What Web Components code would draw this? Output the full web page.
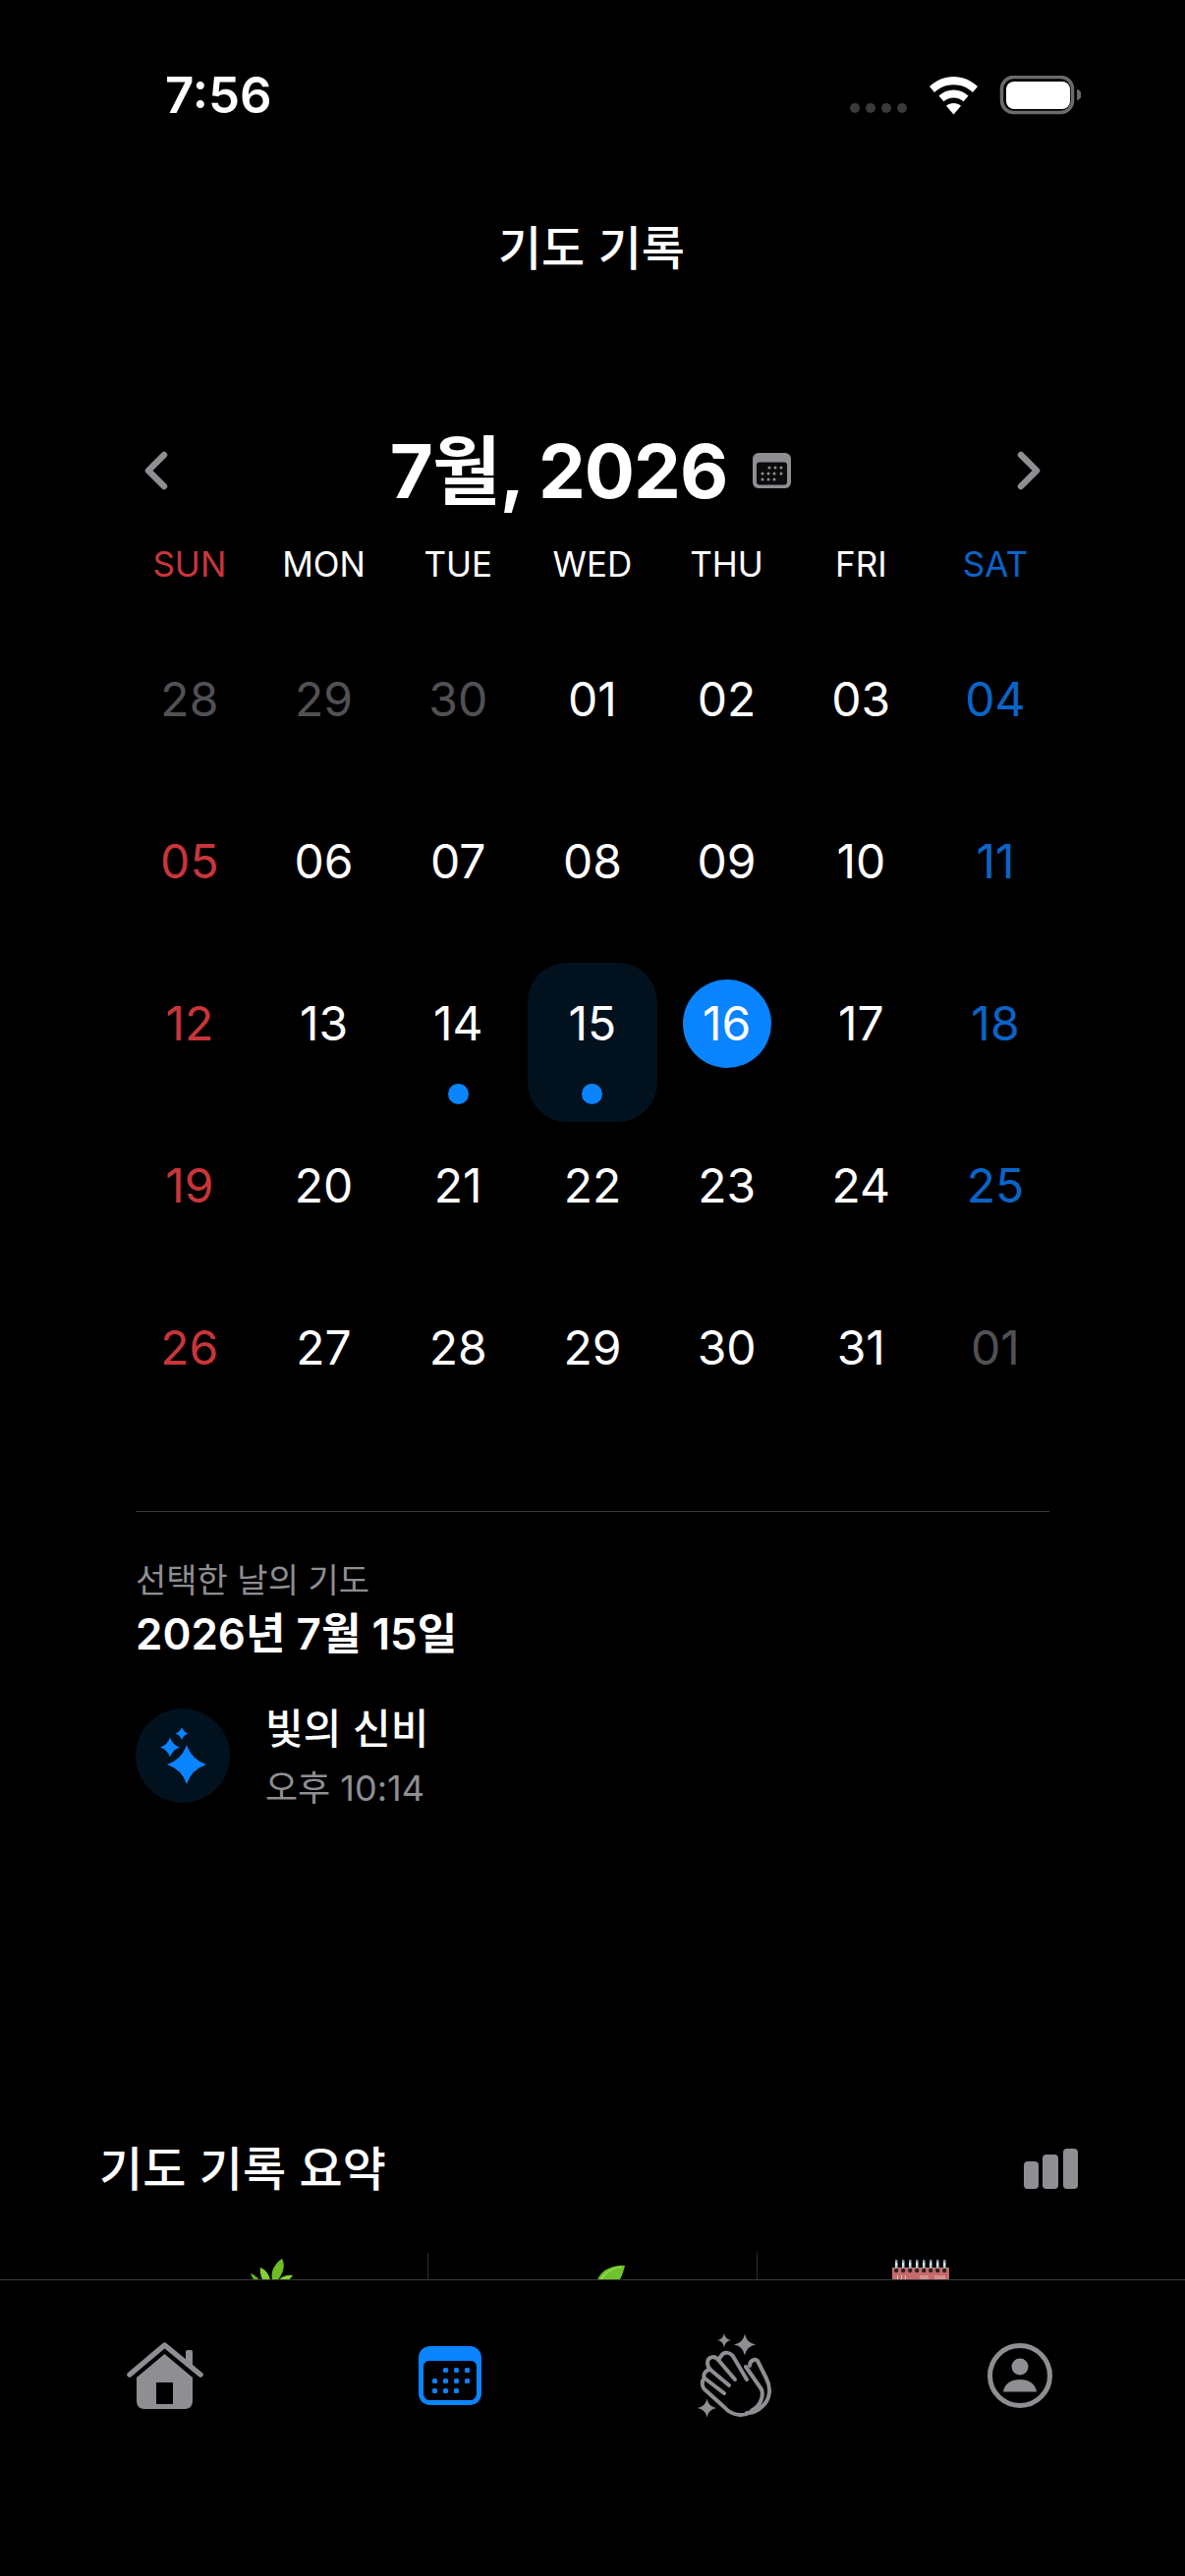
<!DOCTYPE html>
<html lang="ko">
<head>
<meta charset="utf-8">
<title>기도 기록</title>
<style>
  html, body { margin: 0; padding: 0; background: #000; }
  body { width: 1206px; height: 2622px; overflow: hidden; }
</style>
</head>
<body>
<prayer-app></prayer-app>

<script>
const KR = '"Noto Sans CJK KR", sans-serif'
const LATIN = 'Inter, "Noto Sans CJK KR", sans-serif'

// four point star used by the badge and the clap tab
const sparkle = (x, y, r, k = 0.16) => {
  const c = r * k
  return `<path d="M${x} ${y - r}Q${x + c} ${y - c} ${x + r} ${y}Q${x + c} ${y + c} ${x} ${y + r}Q${x - c} ${y + c} ${x - r} ${y}Q${x - c} ${y - c} ${x} ${y - r}Z"/>`
}

customElements.define('status-bar', class extends HTMLElement {
  constructor() {
    super()
    this.attachShadow({ mode: 'open' }).innerHTML = `
      <style>
        :host { display: flex; align-items: flex-start; height: 200px; box-sizing: border-box; padding: 68px 106px 0 168px; color: #fff; }
        .time { font: 600 51px/58px ${LATIN}; flex: 1; }
        svg { display: block; margin-top: 9px; }
      </style>
      <span class="time">7:56</span>
      <svg width="235" height="42" viewBox="0 0 235 42">
        <g fill="#3a3a3c">
          <circle cx="5" cy="33" r="5"/><circle cx="21" cy="33" r="5"/><circle cx="37" cy="33" r="5"/><circle cx="53" cy="33" r="5"/>
        </g>
        <path fill="#fff" d="M105.5 1C114.5 1 123 4.6 130 11l-5 6C119.500 12 113 9.300 105.500 9.300S91.500 12 86 17l-5-6C88 4.600 96.500 1 105.500 1Z"/>
        <path fill="#fff" d="M105.500 14.500C111 14.500 116.200 16.600 120.500 20.500L115.600 26.300C112.800 23.800 109.300 22.500 105.500 22.500S98.200 23.800 95.400 26.300L90.500 20.500C94.800 16.600 100 14.500 105.500 14.500Z"/>
        <path fill="#fff" d="M105.500 28c2.800 0 5.400 1 7.500 2.700L105.500 39.500 98 30.700C100.100 29 102.700 28 105.500 28Z"/>
        <rect x="154.500" y="1.500" width="72" height="36" rx="12" fill="none" stroke="#6b6b6e" stroke-width="3.500"/>
        <rect x="159" y="6" width="65" height="28" rx="8" fill="#fff"/>
        <path fill="#6b6b6e" d="M231 14c3 .6 5 3 5 5.500s-2 5-5 5.500Z"/>
      </svg>
    `
  }
})

customElements.define('nav-title', class extends HTMLElement {
  constructor() {
    super()
    this.attachShadow({ mode: 'open' }).innerHTML = `
      <style>
        :host { display: block; height: 231px; padding: 19px 2px 0 0; box-sizing: border-box; text-align: center; color: #fff; font: 500 48px/60px ${KR}; }
      </style>
      <slot></slot>
    `
  }
})

customElements.define('month-header', class extends HTMLElement {
  constructor() {
    super()
    this.attachShadow({ mode: 'open' }).innerHTML = `
      <style>
        :host { display: flex; align-items: center; height: 96px; padding: 0 147px; color: #fff; }
        .mid { flex: 1; display: flex; align-items: center; justify-content: center; gap: 26px; padding-right: 4px; }
        .label { font: 700 76px/96px ${LATIN}; letter-spacing: -1px; }
        svg { display: block; flex: none; }
      </style>
      <svg width="24" height="40" viewBox="0 0 24 40"><path d="M20 4 4 20l16 16" fill="none" stroke="#8e8e93" stroke-width="6.500" stroke-linecap="round" stroke-linejoin="round"/></svg>
      <div class="mid">
        <span class="label"><slot></slot></span>
        <svg width="39" height="36" viewBox="0 0 39 36">
          <rect width="39" height="36" rx="6" fill="#8e8e93"/>
          <rect x="4" y="9.500" width="31" height="23" rx="3" fill="#0b0b0c"/>
          <g fill="#8e8e93">
            <circle cx="17" cy="15" r="1.500"/><circle cx="23" cy="15" r="1.500"/><circle cx="29" cy="15" r="1.500"/>
            <circle cx="10" cy="21" r="1.500"/><circle cx="16" cy="21" r="1.500"/><circle cx="22" cy="21" r="1.500"/><circle cx="29" cy="21" r="1.500"/>
            <circle cx="10" cy="27" r="1.500"/><circle cx="16" cy="27" r="1.500"/><circle cx="22" cy="27" r="1.500"/>
          </g>
        </svg>
      </div>
      <svg width="24" height="40" viewBox="0 0 24 40"><path d="M4 4l16 16L4 36" fill="none" stroke="#8e8e93" stroke-width="6.500" stroke-linecap="round" stroke-linejoin="round"/></svg>
    `
  }
})

customElements.define('calendar-day', class extends HTMLElement {
  constructor() {
    super()
    this.attachShadow({ mode: 'open' }).innerHTML = `
      <style>
        :host { display: flex; justify-content: center; height: 165px; color: #fff; font: 400 48px/90px ${LATIN}; }
        :host([tone="sun"]) { color: #c8353a; }
        :host([tone="sat"]) { color: #0a64c8; }
        :host([tone="dim"]) { color: #515154; }
        .box { width: 132px; height: 162px; border-radius: 40px; display: flex; flex-direction: column; align-items: center; box-sizing: border-box; padding-top: 17px; }
        :host([selected]) .box { background: #02111e; }
        .num { width: 90px; height: 90px; border-radius: 50%; text-align: center; }
        :host([today]) .num { background: #0a84ff; color: #fff; }
        .dot { display: none; width: 21px; height: 21px; border-radius: 50%; background: #0a84ff; margin-top: 16px; }
        :host([marked]) .dot { display: block; }
      </style>
      <div class="box"><span class="num"><slot></slot></span><span class="dot"></span></div>
    `
  }
})

customElements.define('month-grid', class extends HTMLElement {
  constructor() {
    super()
    const head = [['SUN','#c8353a'],['MON','#fff'],['TUE','#fff'],['WED','#fff'],['THU','#fff'],['FRI','#fff'],['SAT','#0a64c8']]
    const days = [
      ['28','dim'],['29','dim'],['30','dim'],['01'],['02'],['03'],['04','sat'],
      ['05','sun'],['06'],['07'],['08'],['09'],['10'],['11','sat'],
      ['12','sun'],['13'],['14','','marked'],['15','','marked selected'],['16','','today'],['17'],['18','sat'],
      ['19','sun'],['20'],['21'],['22'],['23'],['24'],['25','sat'],
      ['26','sun'],['27'],['28'],['29'],['30'],['31'],['01','dim']
    ]
    this.attachShadow({ mode: 'open' }).innerHTML = `
      <style>
        :host { display: block; padding-left: 124.500px; }
        .week, .days { display: grid; grid-template-columns: repeat(7, 136.700px); }
        .week span { text-align: center; font: 400 35px/44px ${LATIN}; }
        .week { height: 98px; align-content: start; }
      </style>
      <div class="week">${head.map(([t, c]) => `<span style="color:${c}">${t}</span>`).join('')}</div>
      <div class="days">${days.map(([n, tone, flags]) => `<calendar-day ${tone ? `tone="${tone}"` : ''} ${flags || ''}>${n}</calendar-day>`).join('')}</div>
    `
  }
})

customElements.define('selected-day', class extends HTMLElement {
  constructor() {
    super()
    this.attachShadow({ mode: 'open' }).innerHTML = `
      <style>
        :host { display: block; margin: 63px 138px 0; border-top: 1px solid #3a3a3c; padding-top: 45px; height: 641px; box-sizing: border-box; }
        .cap { color: #8e8e93; font: 400 34px/46px ${KR}; }
        .date { color: #fff; font: 600 44px/58px ${LATIN}; margin-top: 4px; }
        .row { display: flex; gap: 36px; margin-top: 40px; align-items: center; }
        .badge { width: 96px; height: 96px; border-radius: 50%; background: #02111e; display: flex; align-items: center; justify-content: center; flex: none; }
        svg { display: block; }
        .name { color: #fff; font: 500 42px/50px ${KR}; }
        .time { color: #8e8e93; font: 400 36px/44px ${LATIN}; margin-top: 16px; }
      </style>
      <div class="cap">선택한 날의 기도</div>
      <div class="date">2026년 7월 15일</div>
      <div class="row">
        <div class="badge">
          <svg width="47" height="58" viewBox="0 0 47 58" fill="#0a84ff">
            ${sparkle(27, 38, 20, 0.25)}${sparkle(10, 20.500, 10, 0.25)}${sparkle(22, 6.500, 6.500, 0.25)}
          </svg>
        </div>
        <div>
          <div class="name">빛의 신비</div>
          <div class="time">오후 10:14</div>
        </div>
      </div>
    `
  }
})

customElements.define('summary-section', class extends HTMLElement {
  constructor() {
    super()
    this.attachShadow({ mode: 'open' }).innerHTML = `
      <style>
        :host { display: block; padding: 0 109px 0 101px; }
        .head { display: flex; align-items: flex-start; justify-content: space-between; height: 60px; color: #fff; font: 500 48px/50px ${KR}; }
        .head svg { margin-top: 8px; }
        .cells { display: grid; grid-template-columns: 334px 335px 1fr; margin-top: 54px; }
        .cell { height: 120px; display: flex; padding-top: 6px; box-sizing: border-box; }
        .cell + .cell { border-left: 1px solid #2c2c2e; }
        svg { display: block; }
      </style>
      <div class="head">
        <span>기도 기록 요약</span>
        <svg width="55" height="41" viewBox="0 0 55 41" fill="#8e8e93">
          <rect x="0" y="13" width="15" height="28" rx="4"/><rect x="19" y="6" width="16" height="35" rx="4"/><rect x="40" y="0" width="15" height="41" rx="4"/>
        </svg>
      </div>
      <div class="cells">
        <div class="cell" style="padding-left:154px">
          <svg width="44" height="44" viewBox="0 0 44 44">
            <path fill="#6dbd25" d="M32 0C36 8 33 17 24 26 19 17 22 7 32 0Z"/>
            <path fill="#86cf33" d="M10 9C17 12 21 19 20 28 13 25 9 18 10 9Z"/>
            <path fill="#86cf33" d="M43 17C37 16 31 18 27 24 33 26 39 23 43 17Z"/>
            <path fill="#63b01f" d="M0 15C5 17 9 20 11 26 6 26 2 21 0 15Z"/>
          </svg>
        </div>
        <div class="cell" style="padding-left:172px">
          <svg width="30" height="44" viewBox="0 0 30 44">
            <path fill="#6fc32c" d="M28 7C26 15 24 24 14 29 7 31 2 28 0 22 3 12 15 6 28 7Z"/>
            <path fill="none" stroke="#a3e05a" stroke-width="1.200" d="M25 8C14 10 6 15 2 24"/>
          </svg>
        </div>
        <div class="cell" style="padding-left:137px">
          <svg width="58" height="44" viewBox="0 0 58 44">
            <defs><linearGradient id="ring" x1="0" y1="0" x2="0" y2="1"><stop offset="0" stop-color="#5f7180"/><stop offset=".4" stop-color="#e6f0f8"/><stop offset="1" stop-color="#8a98a3"/></linearGradient></defs>
            <rect x="0" y="9" width="58" height="35" fill="#c46a6c"/>
            <g fill="url(#ring)">
              <rect x="3" y="1" width="2.500" height="11"/><rect x="10" y="1" width="2.500" height="11"/><rect x="17" y="1" width="2.500" height="11"/><rect x="24" y="1" width="2.500" height="11"/><rect x="31" y="1" width="2.500" height="11"/><rect x="38" y="1" width="2.500" height="11"/><rect x="45" y="1" width="2.500" height="11"/><rect x="52" y="1" width="2.500" height="11"/>
            </g>
            <g fill="#2e2022">
              <circle cx="4.200" cy="12" r="2.200"/><circle cx="11.200" cy="12" r="2.200"/><circle cx="18.200" cy="12" r="2.200"/><circle cx="25.200" cy="12" r="2.200"/><circle cx="32.200" cy="12" r="2.200"/><circle cx="39.200" cy="12" r="2.200"/><circle cx="46.200" cy="12" r="2.200"/><circle cx="53.200" cy="12" r="2.200"/>
            </g>
            <path d="M5 17h1v4H5ZM9 17h1v4H9ZM13 17h1v4h-1Z" fill="#ecc4c4"/>
            <path d="M28 17h9v4h-9ZM43 17h11v4H43Z" fill="#d68e8f"/>
          </svg>
        </div>
      </div>
    `
  }
})

customElements.define('tab-bar', class extends HTMLElement {
  constructor() {
    super()
    this.attachShadow({ mode: 'open' }).innerHTML = `
      <style>
        :host { display: grid; grid-template-columns: repeat(4, 290px); height: 302px; box-sizing: border-box; padding: 52px 23px 0; background: #000; border-top: 1px solid #3a3a3c; align-items: start; }
        div { height: 90px; display: flex; align-items: center; justify-content: center; }
        svg { display: block; }
      </style>
      <div>
        <svg width="78" height="68" viewBox="0 0 78 68" fill="#8e8e93">
          <path fill-rule="evenodd" d="M38.500 12 67 36V60c0 4.400-3 8-7.500 8H17.500C13 68 10 64.400 10 60V36ZM30 41V63H47V41Z"/>
          <rect x="60" y="8" width="7" height="17" rx="2"/>
          <path d="M3 33 38.500 3 75 33" fill="none" stroke="#8e8e93" stroke-width="5.500" stroke-linecap="round" stroke-linejoin="round"/>
        </svg>
      </div>
      <div>
        <svg width="64" height="60" viewBox="0 0 64 60" fill="#0a84ff">
          <path fill-rule="evenodd" d="M12 0H52C59 0 64 5 64 12V48C64 55 59 60 52 60H12C5 60 0 55 0 48V12C0 5 5 0 12 0ZM11 15C7.500 15 5 17.500 5 21V48C5 51.500 7.500 55 11 55H53C56.500 55 59 51.500 59 48V21C59 17.500 56.500 15 53 15Z"/>
          <rect x="25" y="22" width="5" height="5" rx="1.500"/><rect x="36" y="22" width="5" height="5" rx="1.500"/><rect x="47" y="22" width="5" height="5" rx="1.500"/>
          <rect x="14" y="33" width="5" height="5" rx="1.500"/><rect x="25" y="33" width="5" height="5" rx="1.500"/><rect x="36" y="33" width="5" height="5" rx="1.500"/><rect x="47" y="33" width="5" height="5" rx="1.500"/>
          <rect x="14" y="43" width="5" height="5" rx="1.500"/><rect x="25" y="43" width="5" height="5" rx="1.500"/><rect x="36" y="43" width="5" height="5" rx="1.500"/>
        </svg>
      </div>
      <div>
        <svg width="76" height="86" viewBox="0 0 76 86" fill="#8e8e93">
          ${sparkle(27, 7, 7)}${sparkle(48, 11.500, 11)}${sparkle(9.500, 76, 9.500)}
          <g fill="none" stroke="#8e8e93" stroke-width="4" stroke-linecap="round" stroke-linejoin="round">
            <path d="M50 47 37 25C34 19 27 18 24 23L21 27C17 22 10 24 10 30 10 33 11 35 13 37 8 37 5 42 7 46 4 48 4 54 7 57L27 75C35 84 48 86 56 78"/>
            <path d="M21 27 38 47"/>
            <path d="M13 37 32 53"/>
            <path d="M7.500 46 27 61"/>
            <path d="M49 34 65 57C68 66 62 75 56 78"/>
            <path d="M53 33C53 28 58 25 61 28L70 46C75 56 74 68 65 75 60 80 55 81 50 81"/>
          </g>
        </svg>
      </div>
      <div>
        <svg width="66" height="66" viewBox="0 0 66 66" fill="#8e8e93">
          <circle cx="33" cy="33" r="30.500" fill="none" stroke="#8e8e93" stroke-width="5"/>
          <circle cx="33" cy="24" r="8.500"/>
          <path d="M16 49.500C17 41.500 24 37 33 37S49 41.500 50 49.500Z"/>
        </svg>
      </div>
    `
  }
})

customElements.define('prayer-app', class extends HTMLElement {
  constructor() {
    super()
    this.attachShadow({ mode: 'open' }).innerHTML = `
      <style>
        :host { display: flex; flex-direction: column; width: 1206px; height: 2622px; background: #000; }
        main { flex: 1; min-height: 0; overflow: hidden; }
        month-grid { margin-top: 25px; }
      </style>
      <main>
        <status-bar></status-bar>
        <nav-title>기도 기록</nav-title>
        <month-header>7월, 2026</month-header>
        <month-grid></month-grid>
        <selected-day></selected-day>
        <summary-section></summary-section>
      </main>
      <tab-bar></tab-bar>
    `
  }
})
</script>
</body>
</html>
